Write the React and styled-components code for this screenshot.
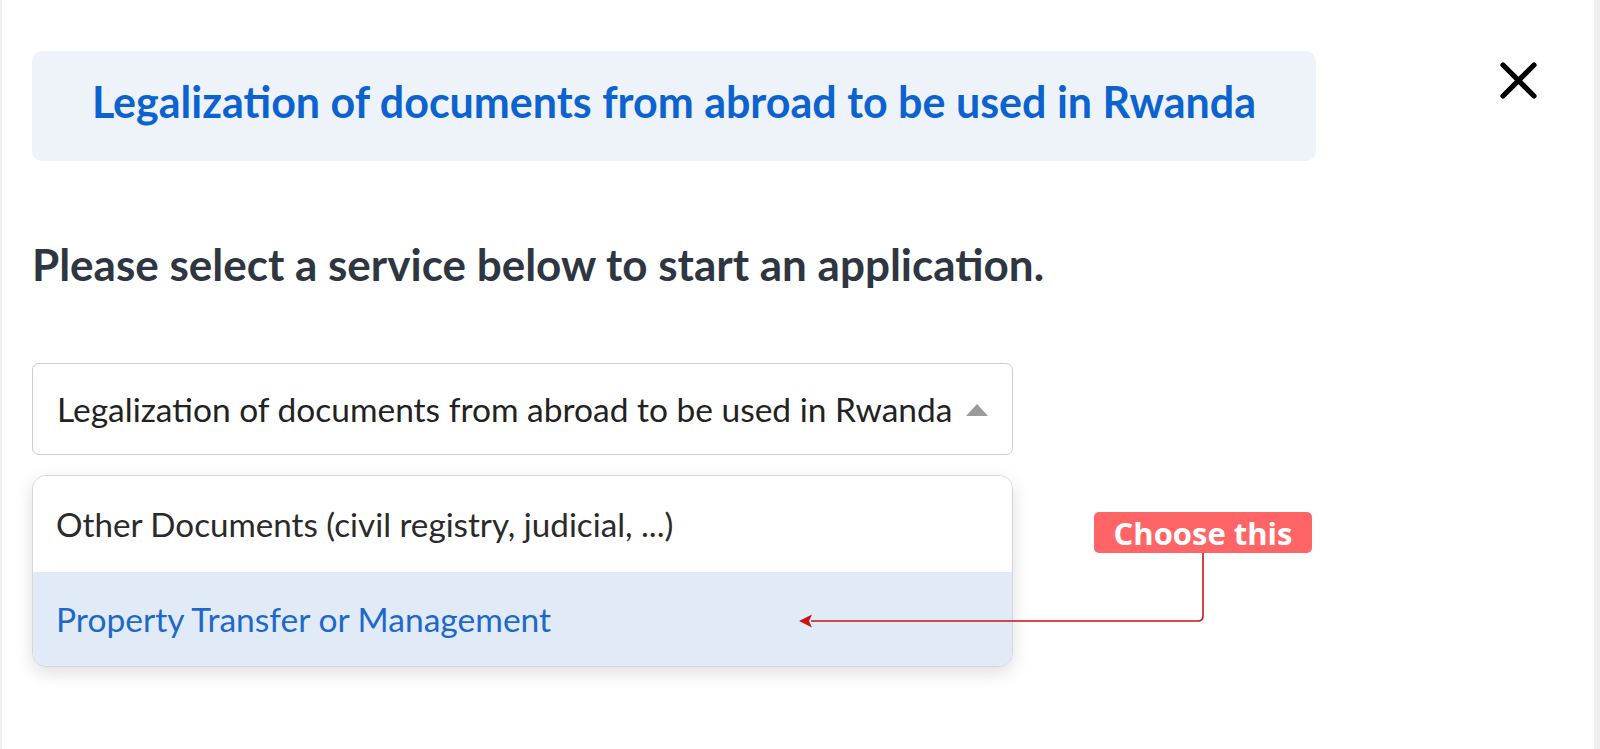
import React from "react";
import styled, { createGlobalStyle } from "styled-components";

const Global = createGlobalStyle`
  html, body { margin: 0; padding: 0; background: #f0f0f0; }
  body { font-family: "Lato", "Open Sans", sans-serif; }
  * { box-sizing: border-box; }
`;

const Page = styled.div`
  display: flex;
  height: 749px;
  padding-left: 2px;
  padding-right: 6px;
`;

const Panel = styled.div`
  position: relative;
  flex: 1;
  background: #ffffff;
  padding: 51px 0 0 30px;
`;

const Header = styled.div`
  display: flex;
  align-items: flex-start;
`;

const TitleBox = styled.div`
  width: 1284px;
  height: 110px;
  border-radius: 10px;
  background: #eef3fa;
  display: flex;
  align-items: center;
  justify-content: center;
  padding-bottom: 8px;
`;

const Title = styled.h1`
  margin: 0;
  font-family: "Lato", sans-serif;
  font-weight: 700;
  font-size: 43px;
  line-height: 1.2;
  color: #0c63cf;
`;

const CloseButton = styled.button`
  margin-left: auto;
  margin-right: 57px;
  margin-top: 11px;
  width: 37px;
  height: 37px;
  padding: 0;
  border: none;
  background: transparent;
  cursor: pointer;
  display: flex;
`;

const Heading = styled.h2`
  margin: 77px 0 0 0;
  font-family: "Lato", sans-serif;
  font-weight: 700;
  font-size: 44px;
  line-height: 1.2;
  color: #2e3641;
`;

const Field = styled.div`
  width: 981px;
`;

const SelectBox = styled.div`
  margin-top: 72px;
  height: 92px;
  border: 1.5px solid #cdcdcd;
  border-radius: 7px;
  display: flex;
  align-items: center;
  padding: 0 24px 0 24px;
  font-size: 33.5px;
  color: #222222;
`;

const SelectValue = styled.span`
  flex: 1;
  white-space: nowrap;
`;

const Caret = styled.span`
  width: 0;
  height: 0;
  border-left: 11.5px solid transparent;
  border-right: 11.5px solid transparent;
  border-bottom: 12px solid #9a9a9a;
  margin-top: 2px;
`;

const Menu = styled.div`
  margin-top: 20px;
  border: 1.5px solid #d6d6d6;
  border-radius: 14px;
  overflow: hidden;
  box-shadow: 0 6px 18px rgba(0, 0, 0, 0.13);
  background: #ffffff;
`;

const Option = styled.div`
  height: ${(p) => p.$h}px;
  display: flex;
  align-items: center;
  padding: 0 23px;
  font-size: ${(p) => (p.$active ? 33.6 : 33.2)}px;
  white-space: nowrap;
  color: ${(p) => (p.$active ? "#1f68c9" : "#2a2a2a")};
  background: ${(p) => (p.$active ? "#e0ebf7" : "#ffffff")};
`;

const Callout = styled.div`
  position: absolute;
  left: 1092px;
  top: 512px;
  width: 218px;
  height: 41px;
  border-radius: 5px;
  background: #ff6566;
  display: flex;
  align-items: center;
  justify-content: center;
  font-family: "Open Sans", sans-serif;
  font-weight: 700;
  font-size: 31px;
  color: #ffffff;
`;

const Connector = styled.svg`
  position: absolute;
  left: 795px;
  top: 553px;
`;

export default function App() {
  return (
    <>
      <Global />
      <Page>
        <Panel>
          <Header>
            <TitleBox>
              <Title>Legalization of documents from abroad to be used in Rwanda</Title>
            </TitleBox>
            <CloseButton aria-label="Close">
              <svg width="37" height="37" viewBox="0 0 37 37">
                <path d="M3 3 L34 34 M34 3 L3 34" stroke="#000" strokeWidth="5.2" strokeLinecap="round" />
              </svg>
            </CloseButton>
          </Header>
          <Heading>Please select a service below to start an application.</Heading>
          <Field>
            <SelectBox>
              <SelectValue>Legalization of documents from abroad to be used in Rwanda</SelectValue>
              <Caret />
            </SelectBox>
            <Menu>
              <Option $h={96}>Other Documents (civil registry, judicial, ...)</Option>
              <Option $h={94} $active>Property Transfer or Management</Option>
            </Menu>
          </Field>
          <Callout>Choose this</Callout>
          <Connector width="420" height="80" viewBox="0 0 420 80">
            <path d="M406 0 L406 63 Q406 68 401 68 L14 68" fill="none" stroke="#c81414" strokeWidth="1.6" />
            <path d="M2 68 L15 61.5 L12 68 L15 74.5 Z" fill="#c81414" />
          </Connector>
        </Panel>
      </Page>
    </>
  );
}
